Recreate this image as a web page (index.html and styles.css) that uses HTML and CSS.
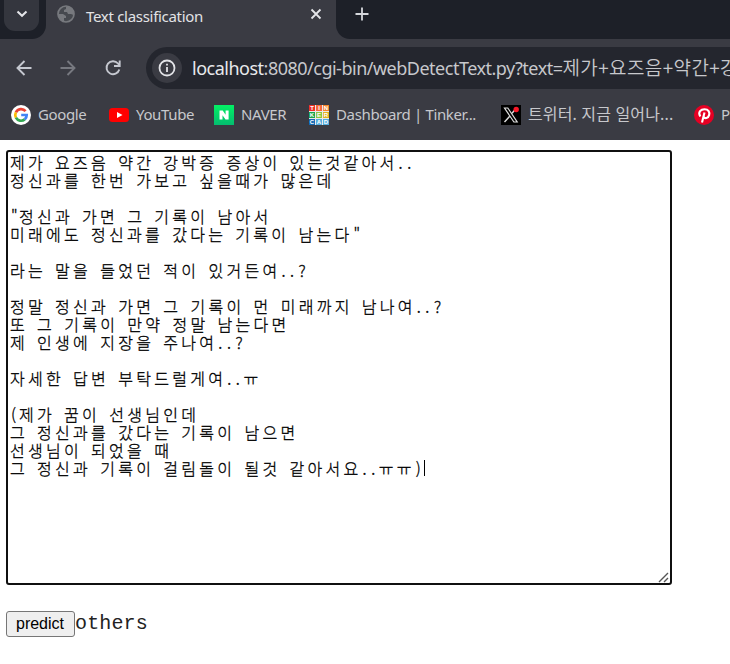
FILE: index.html
```html
<!DOCTYPE html>
<html lang="ko">
<head>
<meta charset="utf-8">
<title>Text classification</title>
<link rel="stylesheet" href="styles.css">
</head>
<body>
<header class="browser">
  <div class="tabs">
    <div class="search-side"><div class="tab-search"><svg width="12" height="8" viewBox="0 0 12 8"><path d="M1.5 1.5 6 5.8 10.500 1.500" fill="none" stroke="#e4e5e9" stroke-width="2"/></svg></div></div>
    <div class="tab">
      <svg class="globe" width="18" height="18" viewBox="0 0 18 18"><circle cx="9" cy="9" r="8" fill="#46494f" stroke="#77797e" stroke-width="1.700"/><path d="M1.500 9H6l3 2v2H7v3.500C3.500 16 1 12.500 1.500 9ZM9 1.500V4L7 5v2h3l1 2h3l2.500 1C18 5 14 1 9 1.500Z" fill="#77797e"/></svg>
      <span class="tab-title">Text classification</span>
      <svg class="close" width="12" height="12" viewBox="0 0 12 12"><path d="m1.500 1.500 9 9m0-9-9 9" stroke="#e4e5e9" stroke-width="1.800"/></svg>
    </div>
    <div class="tab-rest"><svg width="14" height="14" viewBox="0 0 14 14"><path d="M7 .5v13M.5 7h13" stroke="#d5d7dc" stroke-width="1.800"/></svg></div>
  </div>
  <div class="toolbar">
    <svg class="back" width="16" height="16" viewBox="0 0 16 16"><path d="M15.500 8H2M8.500 1 1.500 8l7 7" fill="none" stroke="#c5c8d0" stroke-width="1.900"/></svg>
    <svg class="forward" width="16" height="16" viewBox="0 0 16 16"><path d="M.5 8H14M7.500 1l7 7-7 7" fill="none" stroke="#777980" stroke-width="1.900"/></svg>
    <svg class="reload" width="16" height="16" viewBox="0 0 16 16"><path d="M14.300 9.500A6.500 6.500 0 1 1 13 3.500L14.500 5.500M14.700 .5V6H9" fill="none" stroke="#c5c8d0" stroke-width="1.900"/></svg>
    <div class="address">
      <div class="info"><svg width="18" height="18" viewBox="0 0 18 18"><circle cx="9" cy="9" r="7.500" fill="none" stroke="#e2e3e7" stroke-width="1.800"/><path d="M9 8v5M9 4.700v1.800" stroke="#e2e3e7" stroke-width="1.800"/></svg></div>
      <span class="url"><span class="host">localhost</span><span class="path">:8080/cgi-bin/webDetectText.py?text=</span><span class="query">제가+요즈음+약간+강</span></span>
    </div>
  </div>
  <nav class="bookmarks">
    <div class="bm bm-google"><svg width="20" height="20" viewBox="0 0 20 20"><circle cx="10" cy="10" r="10" fill="#fff"/><g fill="none" stroke-width="2.700"><path d="M14.600 6.200A5.800 5.800 0 0 0 4.900 7.300" stroke="#ea4335"/><path d="M4.900 7.300a5.800 5.800 0 0 0 0 5.400" stroke="#fbbc05"/><path d="M4.900 12.700a5.800 5.800 0 0 0 8.800 1.700" stroke="#34a853"/><path d="M10.200 10h5.500a5.600 5.600 0 0 1-2 4.400" stroke="#4285f4"/></g></svg><span>Google</span></div>
    <div class="bm bm-youtube"><svg width="20" height="20" viewBox="0 0 20 20"><rect y="3" width="20" height="14" rx="3.500" fill="#f00"/><path d="m8 7 5.500 3L8 13Z" fill="#fff"/></svg><span>YouTube</span></div>
    <div class="bm bm-naver"><svg width="20" height="20" viewBox="0 0 20 20"><defs><linearGradient id="ng" x2="0" y2="1"><stop stop-color="#03f064"/><stop offset="1" stop-color="#04bd70"/></linearGradient></defs><path d="M0 0h20v20H0Z" fill="url(#ng)"/><path d="M5.500 14.500v-9h3.200l2.900 4.300V5.500h3v9h-3.100l-3-4.300v4.300Z" fill="#fff"/></svg><span>NAVER</span></div>
    <div class="bm bm-tinker">
      <div class="tiles"><i class="red">T</i><i class="coral">I</i><i class="orange">N</i><i class="green">K</i><i class="lime">E</i><i class="gold">R</i><i class="blue">C</i><i class="sky">A</i><i class="sky">D</i></div>
      <span>Dashboard | Tinker...</span></div>
    <div class="bm bm-x"><svg width="20" height="20" viewBox="0 0 20 20"><path d="M0 0h20v20H0Z" fill="#000"/><path d="M3.500 3h3.300l9.400 14h-3.300Z" fill="none" stroke="#ddd" stroke-width="1.200"/><path d="M15.500 3 11 8.300M8.700 11.300 3.500 17" stroke="#ddd" stroke-width="1.400"/><circle cx="15.200" cy="4.500" r="2.700" fill="#f91828"/></svg><span>트위터. 지금 일어나...</span></div>
    <div class="bm bm-pin"><svg width="20" height="20" viewBox="0 0 20 20"><circle cx="10" cy="10" r="10" fill="#e60023"/><path d="M6.300 11.500C3.500 7 7 4.200 10.500 4.200c4 0 5.500 3 4.600 5.900-1 3.500-4.500 3.700-5.200 1.800M10.500 7.500 8 17.500" fill="none" stroke="#fff" stroke-width="2.100"/></svg><span>P</span></div>
  </nav>
</header>
<main>
  <div class="editor" role="textbox" aria-multiline="true">
    <p>제가 요즈음 약간 강박증 증상이 있는것같아서<b>..</b></p>
    <p>정신과를 한번 가보고 싶을때가 많은데</p>
    <p></p>
    <p><b class="one">"</b>정신과 가면 그 기록이 남아서</p>
    <p>미래에도 정신과를 갔다는 기록이 남는다<b class="one">"</b></p>
    <p></p>
    <p>라는 말을 들었던 적이 있거든여<b>..?</b></p>
    <p></p>
    <p>정말 정신과 가면 그 기록이 먼 미래까지 남나여<b>..?</b></p>
    <p>또 그 기록이 만약 정말 남는다면</p>
    <p>제 인생에 지장을 주나여<b>..?</b></p>
    <p></p>
    <p>자세한 답변 부탁드럴게여<b>..</b>ㅠ</p>
    <p></p>
    <p><b class="one">(</b>제가 꿈이 선생님인데</p>
    <p>그 정신과를 갔다는 기록이 남으면</p>
    <p>선생님이 되었을 때</p>
    <p>그 정신과 기록이 걸림돌이 될것 같아서요<b>..</b>ㅠㅠ<b class="one">)</b><i class="caret"></i></p>
    <svg class="grip" width="11" height="11" viewBox="0 0 11 11"><path d="M1 10 10 1M6 10l4-4" stroke="#555" stroke-width="1.400"/></svg>
  </div>
  <div class="result"><button>predict</button><span>others</span></div>
</main>
</body>
</html>
```
FILE: styles.css
```css
* { box-sizing: border-box; }
body { margin: 0; width: 730px; height: 664px; overflow: hidden; background: #fff; }
svg { display: block; flex: none; }
.browser { height: 140px; overflow: hidden; background: #3a3b43; color: #c7c8cc; font-family: "Noto Sans", "Noto Sans CJK KR", sans-serif; }
.tabs { display: flex; height: 39px; background: #3a3b43; }
.search-side { width: 46px; height: 39px; padding-left: 4px; background: #1d2028; border-bottom-right-radius: 14px; }
.tab-search { display: flex; align-items: center; justify-content: center; width: 35px; height: 31px; padding-bottom: 3px; background: #34363e; border-radius: 0 0 11px 11px; }
.tab { display: flex; width: 290px; height: 39px; padding-left: 11px; }
.globe { margin-top: 5px; }
.tab-title { width: 224px; margin: 4px 0 0 11px; font-size: 15px; line-height: 24px; color: #e2e3e6; white-space: nowrap; letter-spacing: -.3px; }
.close { margin-top: 8px; }
.tab-rest { flex: 1; height: 39px; padding: 7px 0 0 19px; background: #1d2028; border-bottom-left-radius: 14px; }
.toolbar { display: flex; align-items: center; height: 58px; padding-left: 16px; }
.forward { margin-left: 28px; }
.reload { margin-left: 29px; }
.address { display: flex; align-items: center; flex: 1; height: 42px; margin-left: 25px; padding-left: 6px; background: #24262e; border-radius: 21px 0 0 21px; overflow: hidden; }
.info { display: flex; align-items: center; justify-content: center; flex: none; width: 30px; height: 30px; border-radius: 50%; background: #3a3b43; }
.url { display: flex; margin-left: 10px; font-size: 18px; line-height: 28px; white-space: nowrap; letter-spacing: -.5px; }
.host { color: #e8e9ec; }
.query { font: 350 19px/26px "Noto Sans CJK KR", sans-serif; letter-spacing: .4px; }
.bookmarks { display: flex; height: 43px; padding: 8px 0 0 11px; }
.bm { display: flex; flex: none; height: 20px; font-size: 15px; line-height: 18px; white-space: nowrap; }
.bm span { margin-left: 7px; letter-spacing: -.36px; }
.bm-google { width: 98px; }
.bm-youtube { width: 105px; }
.bm-naver { width: 95px; }
.bm-tinker { width: 192px; }
.bm-x { width: 193px; }
.bm-x span { font-size: 16px; letter-spacing: .15px; }
.tiles { display: grid; grid-template-columns: repeat(3, 6px); grid-template-rows: repeat(3, 6px); gap: 1px; width: 20px; height: 20px; background: #e9e9e9; }
.tiles i { color: #fff; font: bold 6px/6px "Liberation Sans", sans-serif; text-align: center; }
.red { background: #ec3027; } .coral { background: #f66839; } .orange { background: #f6852b; }
.green { background: #18a650; } .lime { background: #8bc63f; } .gold { background: #e4b421; }
.blue { background: #126ab5; } .sky { background: #55aede; }
main { padding: 10px 0 0 6px; }
.editor { position: relative; width: 666px; height: 435px; padding: 1px 2px; border: 2px solid #101010; border-radius: 3px; color: #000; font: 300 16px/18px "Noto Sans CJK KR", sans-serif; letter-spacing: 3.28px; word-spacing: 1.35px; white-space: nowrap; -webkit-text-stroke: .3px #000; }
.editor p { display: flex; height: 18px; margin: 0; white-space: pre; }
.editor b { font-weight: 300; letter-spacing: 4.55px; padding-left: 1px; margin-right: -1px; }
.editor .one { width: 9px; padding-left: 1px; margin: 0; letter-spacing: 0; }
.caret { width: 1px; height: 16px; margin-top: 1px; background: #000; }
.grip { position: absolute; right: 1px; bottom: 0; }
.result { display: flex; margin-top: 26px; height: 26px; }
.result button { width: 69px; height: 26px; margin: 0; padding: 0 1px 0 0; border: 1px solid #767676; border-radius: 3px; background: #efefef; color: #000; font: 16px/22px "Liberation Sans", sans-serif; }
.result span { color: #222; font: 20px/25px "Liberation Mono", monospace; letter-spacing: .15px; }
```
